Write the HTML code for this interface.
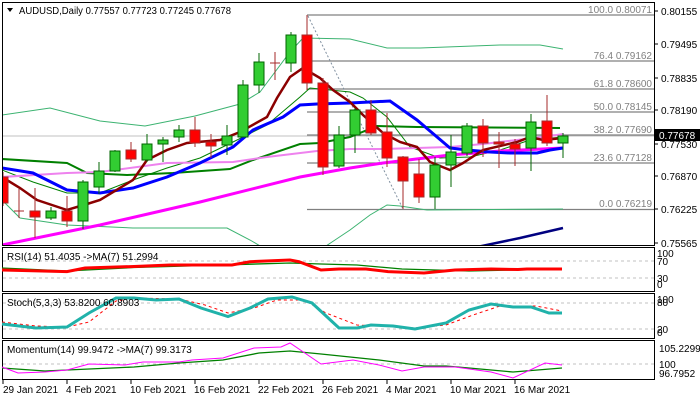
<!DOCTYPE html>
<html><head><meta charset="utf-8"><style>
html,body{margin:0;padding:0;background:#fff;}
svg{display:block;font-family:"Liberation Sans",Tahoma,sans-serif;}
</style></head><body>
<svg width="700" height="400" viewBox="0 0 700 400" xmlns="http://www.w3.org/2000/svg">
<rect width="700" height="400" fill="#fff"/>
<!-- pane borders -->
<g fill="none" stroke="#000" stroke-width="1">
<rect x="2.5" y="2.5" width="652" height="243"/>
<rect x="2.5" y="247.5" width="652" height="44"/>
<rect x="2.5" y="293.5" width="652" height="45"/>
<rect x="2.5" y="340.5" width="652" height="39"/>
</g>
<!-- current price line -->
<line x1="3" y1="136" x2="654" y2="136" stroke="#c0c0c0"/>
<!-- fib -->
<g stroke="#808080" stroke-width="1.3">
<line x1="307" y1="15" x2="654" y2="15"/>
<line x1="307" y1="61" x2="654" y2="61"/>
<line x1="307" y1="89" x2="654" y2="89"/>
<line x1="307" y1="112" x2="654" y2="112"/>
<line x1="307" y1="135" x2="654" y2="135"/>
<line x1="307" y1="163" x2="654" y2="163"/>
<line x1="307" y1="209.5" x2="654" y2="209.5"/>
</g>
<line x1="308" y1="16" x2="403" y2="209" stroke="#8090a0" stroke-dasharray="2,2"/>
<g font-size="10" fill="#808080" text-anchor="end">
<text x="652" y="13">100.0 0.80071</text>
<text x="652" y="59">76.4 0.79162</text>
<text x="652" y="87">61.8 0.78600</text>
<text x="652" y="110">50.0 0.78145</text>
<text x="652" y="133">38.2 0.77690</text>
<text x="652" y="161">23.6 0.77128</text>
<text x="652" y="207">0.0 0.76219</text>
</g>
<svg x="3" y="3" width="651" height="242" viewBox="3 3 651 242" overflow="hidden">
<!-- bands -->
<polyline fill="none" stroke="#3cb371" points="2,115 50,108 100,121 145,126 195,116 240,104 260,92 275,72 290,52 303,38 350,39 387,48 420,48 500,45 540,45 563,49"/>
<polyline fill="none" stroke="#3cb371" points="2,200 20,218 67,225 133,228 227,228 250,240 267,250 320,250 335,240 350,230 370,215 387,205 400,206 427,210 563,209"/>
<polyline fill="none" stroke="#008000" stroke-width="2" points="2,159 67,163 87,173 127,175 173,173 230,169 253,160 300,144 320,143 350,137 377,126 417,127 560,128"/>
<polyline fill="none" stroke="#008000" points="2,170 33,182 67,193 100,193 133,180 167,168 200,158 233,142 267,125 300,97 310,88 350,92 363,98 387,117 410,147 440,158 470,157 500,150 530,140 563,137"/>
<polyline fill="none" stroke="#ff00ff" stroke-width="3" points="2,245 100,225 200,202 300,177 350,168 383,163 450,155 500,151 563,148"/>
<polyline fill="none" stroke="#ee82ee" stroke-width="2" points="2,177 67,173 100,172 167,163 233,162 267,157 317,151 350,149 383,149 450,147 483,144 517,140 550,136 563,134"/>
<polyline fill="none" stroke="#0000ff" stroke-width="3" points="2,168 33,173 67,190 100,193 133,188 167,177 200,163 233,147 253,130 283,117 300,105 317,104 350,103 390,101 417,120 450,148 467,150 490,152 510,153 537,153 550,150 563,148"/>
<polyline fill="none" stroke="#000080" stroke-width="2.5" points="477,247 520,238 563,228"/>
<polyline fill="none" stroke="#8b0000" stroke-width="2.5" points="2,177 20,188 37,200 67,210 87,204 100,200 133,180 147,160 167,150 187,143 220,140 240,132 267,117 277,98 290,77 303,68 320,78 333,90 350,102 363,115 383,133 400,142 417,147 430,162 450,170 463,163 483,150 517,142 530,137 543,140 563,138"/>
<!-- candles -->
<g stroke-width="1">
<g stroke="#a52a2a">
<line x1="3" y1="172" x2="3" y2="206"/>
<line x1="19" y1="189" x2="19" y2="218"/><line x1="14" y1="211" x2="24" y2="211"/>
<line x1="35" y1="188" x2="35" y2="238"/>
<line x1="67" y1="196" x2="67" y2="227"/>
<line x1="131" y1="142" x2="131" y2="162"/>
<line x1="195" y1="117" x2="195" y2="147"/>
<line x1="211" y1="134" x2="211" y2="158"/>
<line x1="275" y1="52" x2="275" y2="80"/><line x1="270" y1="63" x2="280" y2="63"/>
<line x1="307" y1="15" x2="307" y2="90"/>
<line x1="323" y1="78" x2="323" y2="175"/>
<line x1="371" y1="100" x2="371" y2="135"/>
<line x1="387" y1="113" x2="387" y2="167"/>
<line x1="403" y1="156" x2="403" y2="209"/>
<line x1="419" y1="159" x2="419" y2="203"/>
<line x1="483" y1="119" x2="483" y2="157"/>
<line x1="499" y1="132" x2="499" y2="168"/>
<line x1="515" y1="139" x2="515" y2="166"/>
<line x1="547" y1="95" x2="547" y2="146"/>
</g>
<g fill="#ff0000" stroke="#a52a2a">
<rect x="-2" y="177" width="10" height="26"/>
<rect x="30" y="211" width="10" height="6"/>
<rect x="62" y="211" width="10" height="10"/>
<rect x="126" y="150" width="10" height="9"/>
<rect x="190" y="130" width="10" height="13"/>
<rect x="206" y="142" width="10" height="4"/>
<rect x="302" y="35" width="10" height="48"/>
<rect x="318" y="83" width="10" height="84"/>
<rect x="366" y="110" width="10" height="23"/>
<rect x="382" y="132" width="10" height="26"/>
<rect x="398" y="157" width="10" height="24"/>
<rect x="414" y="174" width="10" height="23"/>
<rect x="478" y="126" width="10" height="17"/>
<rect x="494" y="142" width="10" height="2"/>
<rect x="510" y="144" width="10" height="5"/>
<rect x="542" y="121" width="10" height="22"/>
</g>
<g stroke="#006400">
<line x1="51" y1="207" x2="51" y2="220"/>
<line x1="83" y1="180" x2="83" y2="229"/>
<line x1="99" y1="162" x2="99" y2="194"/>
<line x1="115" y1="150" x2="115" y2="172"/>
<line x1="147" y1="134" x2="147" y2="162"/>
<line x1="163" y1="137" x2="163" y2="162"/>
<line x1="179" y1="125" x2="179" y2="142"/>
<line x1="227" y1="125" x2="227" y2="155"/>
<line x1="243" y1="80" x2="243" y2="137"/>
<line x1="259" y1="53" x2="259" y2="93"/>
<line x1="291" y1="32" x2="291" y2="72"/>
<line x1="339" y1="126" x2="339" y2="168"/>
<line x1="355" y1="108" x2="355" y2="153"/>
<line x1="435" y1="157" x2="435" y2="209"/>
<line x1="451" y1="135" x2="451" y2="187"/>
<line x1="467" y1="123" x2="467" y2="156"/>
<line x1="531" y1="114" x2="531" y2="171"/>
<line x1="563" y1="133" x2="563" y2="158"/>
</g>
<g fill="#32cd32" stroke="#006400">
<rect x="46" y="211" width="10" height="7"/>
<rect x="78" y="182" width="10" height="39"/>
<rect x="94" y="171" width="10" height="16"/>
<rect x="110" y="151" width="10" height="20"/>
<rect x="142" y="144" width="10" height="16"/>
<rect x="158" y="140" width="10" height="4"/>
<rect x="174" y="130" width="10" height="7"/>
<rect x="222" y="136" width="10" height="9"/>
<rect x="238" y="85" width="10" height="52"/>
<rect x="254" y="62" width="10" height="23"/>
<rect x="286" y="35" width="10" height="28"/>
<rect x="334" y="135" width="10" height="31"/>
<rect x="350" y="110" width="10" height="25"/>
<rect x="430" y="165" width="10" height="32"/>
<rect x="446" y="152" width="10" height="13"/>
<rect x="462" y="126" width="10" height="27"/>
<rect x="526" y="122" width="10" height="26"/>
<rect x="558" y="136" width="10" height="7"/>
</g>
</g>
</svg>
<!-- title -->
<polygon points="7,8 13,8 10,12" fill="#000"/>
<text x="19" y="14" font-size="10" fill="#000" textLength="212" lengthAdjust="spacingAndGlyphs">AUDUSD,Daily  0.77557 0.77723 0.77245 0.77678</text>
<!-- right axis -->
<g stroke="#000"><line x1="654" y1="11" x2="658" y2="11"/><line x1="654" y1="44" x2="658" y2="44"/><line x1="654" y1="78" x2="658" y2="78"/><line x1="654" y1="110" x2="658" y2="110"/><line x1="654" y1="144" x2="658" y2="144"/><line x1="654" y1="176" x2="658" y2="176"/><line x1="654" y1="209" x2="658" y2="209"/><line x1="654" y1="243" x2="658" y2="243"/></g>
<g font-size="10" fill="#000">
<text x="661" y="15">0.80155</text>
<text x="661" y="48">0.79495</text>
<text x="661" y="82">0.78835</text>
<text x="661" y="114">0.78190</text>
<text x="661" y="148">0.77530</text>
<text x="661" y="180">0.76870</text>
<text x="661" y="213">0.76225</text>
<text x="661" y="247">0.75565</text>
</g>
<rect x="655" y="129" width="45" height="12" fill="#000"/>
<text x="659" y="139" font-size="10" fill="#fff">0.77678</text>
<!-- RSI -->
<g stroke="#c0c0c0" stroke-dasharray="3,3"><line x1="3" y1="261" x2="654" y2="261"/><line x1="3" y1="278" x2="654" y2="278"/>
<line x1="3" y1="303" x2="654" y2="303"/><line x1="3" y1="329" x2="654" y2="329"/><line x1="3" y1="364" x2="654" y2="364"/></g>
<polyline fill="none" stroke="#008000" stroke-width="1.3" points="2,268 67,271 134,267.5 223,265 290,263 321,264 357,265 402,269 469,271 513,270 562,269"/>
<polyline fill="none" stroke="#ff0000" stroke-width="3" points="2,270 67,271.6 85,268 134,266.5 170,265 232,265 250,261.7 290,260 299,261.7 321,270 339,269 366,269 388,271.6 424,273 455,270 491,269 518,269.5 527,269 562,269"/>
<text x="7" y="260" font-size="10" fill="#000">RSI(14) 51.4035  -&gt;MA(7) 51.2994</text>
<!-- Stoch -->
<polyline fill="none" stroke="#ff0000" stroke-dasharray="3,3" points="2,322 36,326 67,327 89,322 116,301 134,298 179,299 205,305 228,313 254,308 277,300 304,300 326,313 357,325 415,328 446,325 473,315 500,306 536,306 562,311"/>
<polyline fill="none" stroke="#20b2aa" stroke-width="3" points="2,324 36,328 67,327 89,313 116,298 134,298 156,300 179,299 201,308 228,316.5 250,308 268,299 292,297 312,303 339,328 357,328 371,325 393,326 415,329 446,323 469,310 491,304 513,307 531,307 549,313 562,313"/>
<text x="7" y="306" font-size="10" fill="#000">Stoch(5,3,3) 53.8200 60.8903</text>
<!-- Momentum -->
<polyline fill="none" stroke="#008000" stroke-width="1.3" points="2,368 45,371 134,367 179,363 223,360 259,353 290,351 321,354 379,360 424,366 446,366 469,368 513,372 562,368"/>
<polyline fill="none" stroke="#ff00ff" points="2,367 18,373 45,372 67,370 89,364 125,365 143,362 179,362 192,360 223,358 254,348 281,347 290,343 321,364 353,360 379,365 402,371 424,367 455,367 491,372 513,378 545,363 562,365"/>
<text x="7" y="353" font-size="10" fill="#000">Momentum(14) 99.9472  -&gt;MA(7) 99.3173</text>
<!-- sub axis labels -->
<g font-size="10" fill="#000">
<text x="657" y="257">100</text><text x="657" y="265">70</text><text x="657" y="282">30</text><text x="657" y="288">0</text>
<text x="657" y="303">100</text><text x="657" y="306">80</text><text x="657" y="333">20</text><text x="657" y="336">0</text>
<text x="659" y="352">105.2299</text><text x="659" y="368">100</text><text x="659" y="377">96.7952</text>
</g>
<!-- date axis -->
<g stroke="#000"><line x1="3" y1="380" x2="3" y2="384"/><line x1="67" y1="380" x2="67" y2="384"/><line x1="131" y1="380" x2="131" y2="384"/><line x1="195" y1="380" x2="195" y2="384"/><line x1="259" y1="380" x2="259" y2="384"/><line x1="323" y1="380" x2="323" y2="384"/><line x1="387" y1="380" x2="387" y2="384"/><line x1="451" y1="380" x2="451" y2="384"/><line x1="515" y1="380" x2="515" y2="384"/></g>
<g font-size="10" fill="#000">
<text x="3" y="393">29 Jan 2021</text>
<text x="66" y="393">4 Feb 2021</text>
<text x="130" y="393">10 Feb 2021</text>
<text x="194" y="393">16 Feb 2021</text>
<text x="258" y="393">22 Feb 2021</text>
<text x="322" y="393">26 Feb 2021</text>
<text x="386" y="393">4 Mar 2021</text>
<text x="450" y="393">10 Mar 2021</text>
<text x="514" y="393">16 Mar 2021</text>
</g>
</svg>
</body></html>
